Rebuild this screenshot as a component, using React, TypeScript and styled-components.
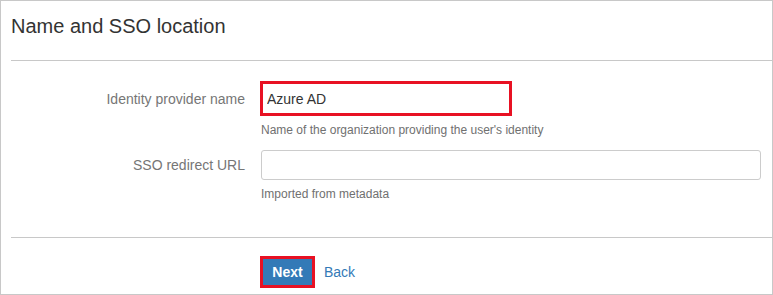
import React from 'react';
import styled, { createGlobalStyle } from 'styled-components';

const Global = createGlobalStyle`
    html, body {
        margin:0;
        padding:0;
        background:#fff;
    }
    body {
        font-family:"Liberation Sans", Arial, sans-serif;
    }
`

const Panel = styled.div`
    width:773px;
    height:295px;
    box-sizing:border-box;
    border:1px solid #c8c8c8;
    background:#fff;
    padding-left:10px;
`

const Header = styled.div`
    height:60px;
    box-sizing:border-box;
    padding-top:13px;
    border-bottom:1px solid #c8c8c8;
`

const Title = styled.h2`
    margin:0;
    font-size:20px;
    line-height:24px;
    font-weight:normal;
    color:#333;
`

const Form = styled.div`
    display:grid;
    grid-template-columns:234px 1fr;
    align-content:start;
    column-gap:16px;
    padding:20px 10px 0 0;
    height:177px;
    box-sizing:border-box;
    border-bottom:1px solid #c8c8c8;
`

const Label = styled.label`
    font-size:14px;
    line-height:20px;
    color:#767676;
    text-align:right;
    align-self:center;
`

const Field = styled.div`
    display:flex;
    flex-direction:column;
`

const Row = styled.div`
    display:contents;
`

const Input = styled.input<{ $highlight?: boolean }>`
    box-sizing:border-box;
    font-family:"Liberation Sans", Arial, sans-serif;
    font-size:14px;
    color:#333;
    outline:none;
    background:#fff;
    ${p => p.$highlight ? `
        width:252px;
        height:35px;
        margin-left:-1px;
        border:3px solid #e81123;
        border-radius:0;
        padding:0 4px;
    ` : `
        width:500px;
        height:30px;
        border:1px solid #ccc;
        border-radius:3px;
        padding:0 6px;
    `}
`

const Help = styled.div`
    grid-column:2;
    font-size:12px;
    line-height:17px;
    color:#707070;
    margin:6px 0 11px;
`

const Footer = styled.div`
    display:flex;
    align-items:center;
    gap:9px;
    padding:18px 0 0 249px;
`

const NextButton = styled.button`
    width:55px;
    height:32px;
    box-sizing:border-box;
    border:3px solid #e81123;
    background:#337ab7;
    color:#fff;
    font-family:"Liberation Sans", Arial, sans-serif;
    font-size:14px;
    font-weight:bold;
    padding:0;
    cursor:pointer;
`

const BackLink = styled.a`
    font-size:14px;
    color:#337ab7;
    text-decoration:none;
    cursor:pointer;
`

const App = () => {
    return (
        <>
            <Global />
            <Panel>
                <Header>
                    <Title>Name and SSO location</Title>
                </Header>
                <Form>
                    <Row>
                        <Label>Identity provider name</Label>
                        <Field>
                            <Input $highlight defaultValue="Azure AD" />
                        </Field>
                        <Help>Name of the organization providing the user's identity</Help>
                    </Row>
                    <Row>
                        <Label>SSO redirect URL</Label>
                        <Field>
                            <Input />
                        </Field>
                        <Help>Imported from metadata</Help>
                    </Row>
                </Form>
                <Footer>
                    <NextButton>Next</NextButton>
                    <BackLink>Back</BackLink>
                </Footer>
            </Panel>
        </>
    );
};

export default App;
